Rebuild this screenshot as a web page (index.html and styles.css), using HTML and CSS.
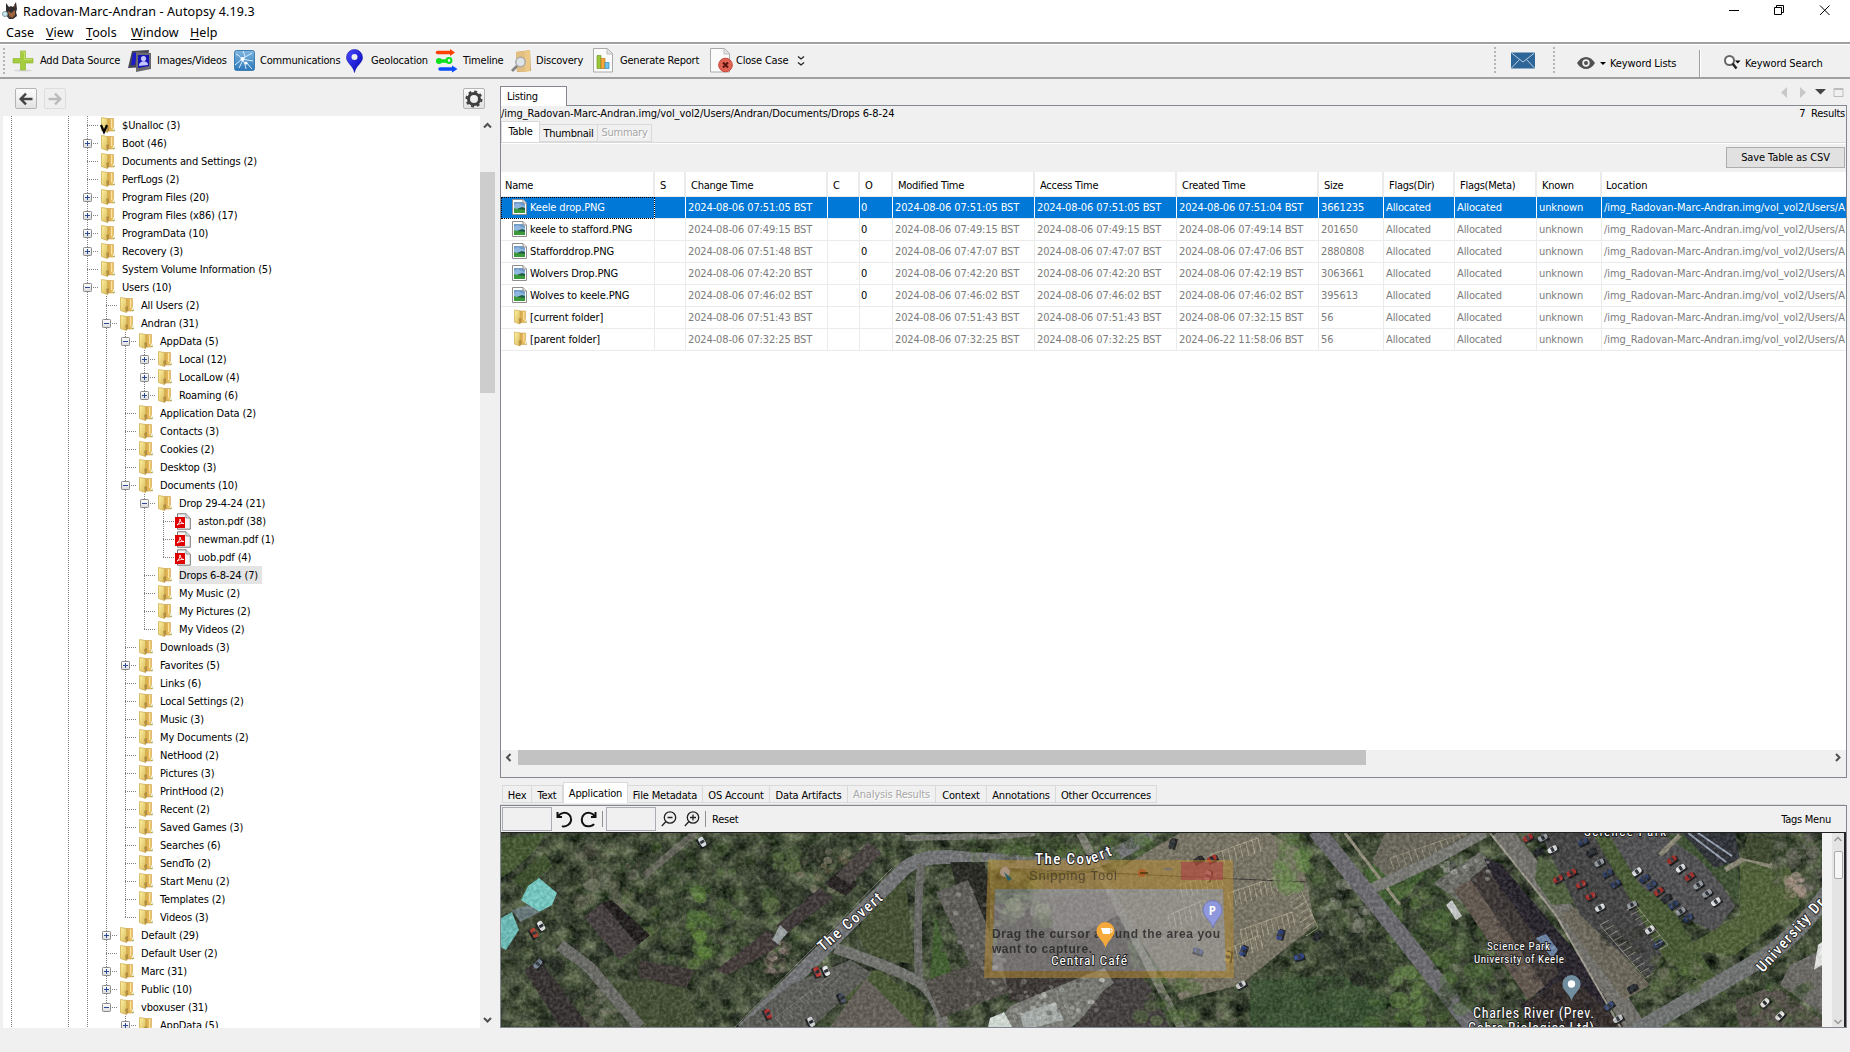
FILE: index.html
```html
<!DOCTYPE html>
<html lang="en">
<head>
<meta charset="utf-8">
<title>Radovan-Marc-Andran - Autopsy 4.19.3</title>
<link rel="stylesheet" href="styles.css">
</head>
<body>
<svg class="defs" width="0" height="0">
  <defs>
    <linearGradient id="gFront" x1="0" y1="0" x2="1" y2="1"><stop offset="0" stop-color="#fdf3a4"/><stop offset="1" stop-color="#d9b85a"/></linearGradient>
    <linearGradient id="gBack" x1="0" y1="0" x2="1" y2="0"><stop offset="0" stop-color="#c99c3e"/><stop offset="1" stop-color="#f8cf74"/></linearGradient>
    <linearGradient id="gBox" x1="0" y1="0" x2="0" y2="1"><stop offset="0" stop-color="#fff"/><stop offset="1" stop-color="#dcdcdc"/></linearGradient>
    <linearGradient id="gBlue" x1="0" y1="0" x2="0" y2="1"><stop offset="0" stop-color="#7fb6e0"/><stop offset="1" stop-color="#2a76b8"/></linearGradient>
    <linearGradient id="gPin" x1="0" y1="0" x2="1" y2="1"><stop offset="0" stop-color="#4a4aff"/><stop offset="1" stop-color="#0000b8"/></linearGradient>
    <symbol id="folder" viewBox="0 0 14 16">
      <path d="M5 1.500h7.500v9.500l.7.500v2.500H5z" fill="url(#gBack)" stroke="#c79f4d" stroke-width=".6"/>
      <path d="M10.500 2v9" stroke="#fde4a6" stroke-width="1"/>
      <path d="M.5.500l6 1v14L.5 13.500z" fill="url(#gFront)" stroke="#d2b155" stroke-width=".8"/>
      <path d="M5 10l3-1v5l-2 1.500z" fill="#a5803a" opacity=".7"/>
      <path d="M12 10.500h1.500v2.500H12z" fill="#e9f2e0"/><path d="M12.500 13h1v1h-1z" fill="#7aa24b"/>
    </symbol>
    <symbol id="image" viewBox="0 0 15 16">
      <path d="M.5.500h10.500l3.500 3.500v11.500H.5z" fill="#fff" stroke="#8e8e8e"/>
      <path d="M2 3h9l2 2v8.500H2z" fill="#6f9cc9"/><path d="M2 6l4-2 3 2 4 1v3H2z" fill="#8fb7df"/>
      <path d="M2 9l3 1 4-1 4 1v4H2z" fill="#3c9a3a"/><path d="M5 10l5-2 3 1v2z" fill="#1e5d43"/>
      <path d="M11 .5V4h3.500" fill="#eee" stroke="#8e8e8e"/>
    </symbol>
    <symbol id="pdf" viewBox="0 0 16 17">
      <path d="M2.500.8h8.500L15.300 5v11.200H2.500z" fill="#f4f4f4" stroke="#777"/><path d="M11 .8V5h4" fill="#ddd" stroke="#888" stroke-width=".8"/>
      <path d="M0 4h10v11H0z" fill="#e10000"/><path d="M2 12c2-1 3-4 3-6 .3 3 2 4.500 4 4.500-2.500-.3-5 .3-7 1.500z" fill="none" stroke="#fff" stroke-width=".9"/>
    </symbol>
  </defs>
</svg>

<header class="titlebar">
  <svg class="dog" width="16" height="17" viewBox="0 0 16 17"><path d="M4 1l3 4 2-1 2 1 3-5 1 7-1 3 1 4-4 3H7l-3-4z" fill="#332d2d"/><path d="M6 9l3 2 4-3v5l-3 3-3-2z" fill="#9e643f"/><path d="M12 3l1-1v4z" fill="#b0704d"/><circle cx="3" cy="12" r="2.500" fill="#cfeaf2" stroke="#7c9aa5"/><path d="M5 14l3 2" stroke="#555"/></svg>
  <span class="title">Radovan-Marc-Andran - Autopsy 4.19.3</span>
  <svg class="winctl" width="112" height="20" viewBox="0 0 112 20" fill="none" stroke="#000"><path d="M5 10.500h10M50.500 7.500h7v7h-7zM52.500 7V5.500h7v7H58M96 5.500l9.500 9.500M105.500 5.500L96 15"/></svg>
</header>
<nav class="menubar"><span class="m1">Case</span><span class="m2"><u>V</u>iew</span><span class="m3"><u>T</u>ools</span><span class="m4"><u>W</u>indow</span><span class="m5"><u>H</u>elp</span></nav>

<div class="toolbar">
  <i class="grip"></i>
  <div class="tools">
    <svg width="21" height="22" viewBox="0 0 21 22"><ellipse cx="10" cy="20.500" rx="9" ry="1" fill="#d5d5d5"/><path d="M7.500 1h5v7.500H20v4.500h-7.500v7h-5v-7H0V8.500h7.500z" fill="#a4cc3c" stroke="#93b93a" stroke-width=".7"/><path d="M8.500 2h3v7.500H19" fill="none" stroke="#c4e070"/></svg><span>Add Data Source</span>
    <svg width="24" height="23" viewBox="0 0 24 23"><path d="M4 2l17-1-2 17L0 19z" fill="#454553"/><path d="M5 4l4-.5-2 12-4 1z" fill="#1b1bcc"/><path d="M8 3l15 1v16l-15 3z" fill="#6a6a70"/><path d="M10 6h11v11l-11 2z" fill="#1514b4"/><circle cx="15.500" cy="9.500" r="2.600" fill="#c5c6ff"/><path d="M11 17c0-6 9-6 9-1z" fill="#c5c6ff"/></svg><span>Images/Videos</span>
    <svg width="21" height="21" viewBox="0 0 21 21"><rect x=".5" y=".5" width="20" height="20" rx="2" fill="url(#gBlue)" stroke="#3f80b3"/><path d="M2 4c6 3 9 8 10 15M1 15l7-6 10-6M8 9l11 2M12 12l6 7M5 18l6-12-2-5" stroke="#dbeeff" stroke-width="1" fill="none"/><circle cx="8.500" cy="9" r="2" fill="#fff"/><circle cx="12" cy="13" r="1.500" fill="#fff"/></svg><span>Communications</span>
    <svg width="17" height="24" viewBox="0 0 17 24"><path d="M8.500 23.500C7.500 17 .5 14 .5 8.500a8 8 0 0 1 16 0c0 5.500-7 8.500-8 15z" fill="url(#gPin)" stroke="#1010a8" stroke-width=".6"/><circle cx="8.500" cy="8" r="3" fill="#eee"/></svg><span>Geolocation</span>
    <svg width="23" height="23" viewBox="0 0 23 23" stroke-width="3.500" stroke-linecap="round"><path d="M2.500 3.500h14" stroke="#ff4100"/><path d="M15 0l5 3.500-5 3.500z" fill="#ff4100"/><path d="M3 12h8" stroke="#0be01c"/><circle cx="4" cy="12" r="3" fill="#0be01c"/><circle cx="14" cy="11.500" r="2.400" fill="none" stroke="#0be01c" stroke-width="2"/><path d="M5 20h13" stroke="#0a4dff"/><path d="M17 16.500l5.500 3.500-5.500 3.500z" fill="#0a4dff"/></svg><span>Timeline</span>
    <svg width="21" height="24" viewBox="0 0 21 24"><path d="M5 3l14-2 1 21-14 1z" fill="#cda864"/><path d="M14 2l5-1v21l-5 1z" fill="#edc987"/><path d="M5 3l9-1v21l-8-1z" fill="#e2bf80"/><circle cx="9.500" cy="13" r="4.700" fill="#dfe5e7" stroke="#aaa" stroke-width="1.500"/><path d="M6 17l-5 5" stroke="#858585" stroke-width="2.800"/></svg><span>Discovery</span>
    <svg width="21" height="25" viewBox="0 0 21 25"><path d="M.5.500h14l5 5v18.500H.5z" fill="#fbfbfb" stroke="#aaa"/><path d="M14 .5V6h5.500" fill="#e3e3e3" stroke="#bbb"/><path d="M4 7.500h4v13H4z" fill="#9bc73a" stroke="#739c24" stroke-width=".7"/><path d="M8 10.500h4v10H8z" fill="#f6a63b" stroke="#bf761a" stroke-width=".7"/><path d="M12 14.500h4v6h-4z" fill="#70c5ee" stroke="#328fbc" stroke-width=".7"/></svg><span>Generate Report</span>
    <svg width="23" height="25" viewBox="0 0 23 25"><path d="M.5.500h14l5 5v18.500H.5z" fill="#fbfbfb" stroke="#aaa"/><path d="M14 .5V6h5.500" fill="#e3e3e3" stroke="#bbb"/><circle cx="15.500" cy="17" r="6.800" fill="#df6354" stroke="#c84435"/><path d="M13 14.500l5 5m0-5l-5 5" stroke="#59130d" stroke-width="2"/></svg><span>Close Case</span>
    <svg width="9" height="12" viewBox="0 0 9 12" fill="none" stroke="#222" stroke-width="1.300"><path d="M1 1.500L4 4l3-2.500M1 7.500L4 10l3-2.500"/></svg>
  </div>
  <div class="tools-right">
    <i class="grip"></i>
    <svg width="24" height="17" viewBox="0 0 24 17"><path d="M0 .5h24v16H0z" fill="#2e6599"/><path d="M.5 1l11.500 9L23.500 1M.5 16l8-8.500M23.500 16l-8-8.500" stroke="#b7cde0" fill="none"/></svg>
    <i class="grip"></i>
    <svg class="eye" width="18" height="12" viewBox="0 0 18 12"><path d="M0 6c5-8 13-8 18 0-5 8-13 8-18 0z" fill="#505050"/><circle cx="9" cy="6" r="3.700" fill="#f0f0f0"/><circle cx="9" cy="6" r="2" fill="#505050"/></svg>
    <i class="caret"></i><span class="kl">Keyword Lists</span><i class="vsep"></i>
    <svg class="lens" width="17" height="15" viewBox="0 0 17 15"><circle cx="5.500" cy="5.500" r="4.500" fill="#fff" stroke="#666" stroke-width="2"/><path d="M8.500 8.500l4 5" stroke="#222" stroke-width="2.500"/><path d="M11 5.500h5.500l-2.700 3z" fill="#000"/></svg>
    <span class="ks">Keyword Search</span>
  </div>
</div>

<main class="work">
  <section class="left">
    <div class="navbar">
      <span class="btn"><svg width="14" height="12" viewBox="0 0 14 12" fill="none" stroke="#444" stroke-width="2.400"><path d="M7 .7L1.700 6 7 11.300M2 6h11.500"/></svg></span>
      <span class="btn off"><svg width="14" height="12" viewBox="0 0 14 12" fill="none" stroke="#bbb" stroke-width="2.400"><path d="M7 .7L12.300 6 7 11.300M12 6H.5"/></svg></span>
      <span class="btn gear"><svg width="18" height="18" viewBox="-9 -9 18 18"><circle r="5.500" fill="none" stroke="#3f3f3f" stroke-width="3"/><circle r="7.500" fill="none" stroke="#3f3f3f" stroke-width="2" stroke-dasharray="2.940 2.940"/></svg></span>
    </div>
    <div class="treebox">
      <div class="tree" id="tree"></div>
      <div class="vbar">
        <svg width="15" height="18" viewBox="0 0 15 18" fill="none" stroke="#505050" stroke-width="2"><path d="M4 11.500L7.500 8l3.500 3.500"/></svg>
        <i class="vthumb"></i>
        <svg class="dn" width="15" height="18" viewBox="0 0 15 18" fill="none" stroke="#505050" stroke-width="2"><path d="M4 8l3.500 3.500L11 8"/></svg>
      </div>
    </div>
  </section>

  <section class="right">
    <div class="toptabs"><span class="listing">Listing</span>
      <svg width="66" height="11" viewBox="0 0 66 11"><path d="M6 0v11L0 5.500zM19 0v11l6-5.500z" fill="#c8c8c8"/><path d="M34 2h11l-5.500 5.500z" fill="#444"/><path d="M53 1.500h9v8h-9z" fill="none" stroke="#bdbdbd"/><path d="M53 2.500h9" stroke="#bdbdbd"/></svg>
    </div>
    <div class="panel">
      <div class="pathrow"><span class="path">/img_Radovan-Marc-Andran.img/vol_vol2/Users/Andran/Documents/Drops 6-8-24</span><span>7&nbsp; Results</span></div>
      <div class="tabs t1"><span class="on">Table</span><span>Thumbnail</span><span class="dis">Summary</span></div>
      <div class="saverow"><span class="save">Save Table as CSV</span></div>
      <div class="grid" id="grid"></div>
      <div class="hbar"><svg width="17" height="15" viewBox="0 0 17 15" fill="none" stroke="#505050" stroke-width="2"><path d="M9.500 4L6 7.500 9.500 11"/></svg><i class="hthumb"></i><svg class="rt" width="17" height="15" viewBox="0 0 17 15" fill="none" stroke="#505050" stroke-width="2"><path d="M7 4l3.500 3.500L7 11"/></svg></div>
    </div>
    <div class="tabs t2"><span>Hex</span><span>Text</span><span class="on">Application</span><span>File Metadata</span><span>OS Account</span><span>Data Artifacts</span><span class="dis">Analysis Results</span><span>Context</span><span>Annotations</span><span>Other Occurrences</span></div>
    <div class="viewer">
      <div class="vtools">
        <i class="field"></i>
        <svg width="17" height="17" viewBox="0 0 17 17" fill="none" stroke="#111" stroke-width="2"><path d="M1.500 1v5H6M2 5.500C5 1 10 1 13 3.500s3 8-1 10.500-6 1-6 1"/></svg>
        <svg width="17" height="17" viewBox="0 0 17 17" fill="none" stroke="#111" stroke-width="2"><path d="M15.500 1v5H11M15 5.500C12 1 7 1 4 3.500s-3 8 0 10.500 9 1 10-1"/></svg>
        <i class="bar"></i><i class="field"></i>
        <svg width="16" height="16" viewBox="0 0 16 16" fill="none" stroke="#222" stroke-width="1.300"><circle cx="9" cy="6.500" r="5.700"/><path d="M6.500 6.500h5M5 10.500L.8 15"/></svg>
        <svg width="16" height="16" viewBox="0 0 16 16" fill="none" stroke="#222" stroke-width="1.300"><circle cx="9" cy="6.500" r="5.700"/><path d="M6 6.500h6M9 3.500v6M5 10.500L.8 15"/></svg>
        <i class="bar"></i><span class="reset">Reset</span><span class="tags">Tags Menu</span>
      </div>
      <div class="photo">
        <svg id="map" width="1321" height="194" viewBox="501 833 1321 194">
          <defs>
            <filter id="foliage" x="0" y="0" width="100%" height="100%" color-interpolation-filters="sRGB"><feTurbulence type="fractalNoise" baseFrequency=".06 .07" numOctaves="5" seed="8"/><feColorMatrix values=".6 .1 0 0 -.11  .6 .15 0 0 -.09  .5 .05 0 0 -.08  0 0 0 0 1"/></filter>
            <filter id="grain" x="0" y="0" width="100%" height="100%" color-interpolation-filters="sRGB"><feTurbulence type="fractalNoise" baseFrequency=".3" numOctaves="3" seed="4"/><feColorMatrix values="2.200 0 0 0 -.7  2.200 0 0 0 -.7  2.200 0 0 0 -.7  0 0 0 0 .13"/></filter>
          </defs>
          <rect x="501" y="833" width="1321" height="194" filter="url(#foliage)"/>
          <g id="land"></g>
          <rect x="501" y="833" width="1321" height="194" filter="url(#grain)"/>
          <g>
            <path d="M988 860h245l1 118H984zM995 889l-3 82h234l-3-82z" fill="#b48a34" fill-rule="evenodd" opacity=".55"/>
            <path d="M995 889h228l3 82H992z" fill="#b3b1b4" opacity=".45"/>
            <path d="M1181 862h42v18h-42z" fill="#b02b4a" opacity=".45"/>
            <circle cx="1005" cy="872" r="5" fill="#b9a3a0" opacity=".7"/><path d="M1004 872l8 7-4 2z" fill="#285c66"/>
            <circle cx="1142" cy="873" r="4" fill="#b8541f" opacity=".7"/><path d="M1140 873h8" stroke="#46340d" stroke-width="1.500"/><path d="M1164 869h8" stroke="#7c7370" stroke-width="2"/>
          </g>
          <g class="snip"><text x="1029" y="880" textLength="88" class="sniph">Snipping Tool</text><text x="992" y="938" textLength="228">Drag the cursor around the area you</text><text x="992" y="953" textLength="100">want to capture.</text></g>
          <path d="M1213 928c-2-8-10-11-10-18a9.500 9.500 0 0 1 19 0c0 7-7 10-9 18z" fill="#8f98dc" stroke="#646eb5" stroke-width=".7"/>
          <path d="M1105.500 948c-2-8-9-10-9-17a9 9 0 0 1 18 0c0 7-7 9-9 17z" fill="#f5a93a"/><path d="M1101 928h9v6h-7z" fill="#fff"/><path d="M1110 929h2v3h-2" fill="none" stroke="#fff"/>
          <path d="M1571.500 1001c-2-8-9-10-9-17a9 9 0 0 1 18 0c0 7-7 9-9 17z" fill="#718e9f"/><circle cx="1571.500" cy="984" r="3.700" fill="#fff"/>
          <g class="maplabels">
            <text class="plain" x="1209" y="915" font-size="12" font-weight="700">P</text>
            <text x="1035" y="864" textLength="57" font-size="15" font-weight="500">The Cov</text>
            <text transform="translate(1093 863) rotate(-22)" font-size="15" font-weight="500" textLength="21">ert</text>
            <text transform="translate(823 952) rotate(-41)" font-size="15" font-weight="500" textLength="80">The Covert</text>
            <text x="1051" y="965" textLength="76" font-size="13.500">Central Café</text>
            <text x="1584" y="836" textLength="82" font-size="13">Science Park</text>
            <text x="1487" y="950" textLength="63" font-size="11">Science Park</text>
            <text x="1474" y="963" textLength="90" font-size="11">University of Keele</text>
            <text x="1473" y="1018" textLength="121" font-size="14">Charles River (Prev.</text>
            <text x="1468" y="1033" textLength="126" font-size="14">Cobra Biologics Ltd)</text>
            <text transform="translate(1763 973) rotate(-48)" font-size="15" font-weight="500" textLength="93">University Dr</text>
          </g>
        </svg>
        <div class="pbar"><svg width="12" height="18" viewBox="0 0 12 18" fill="none" stroke="#999" stroke-width="1.500"><path d="M2.500 8L6 4.500 9.500 8"/></svg><i></i><svg class="dn" width="12" height="12" viewBox="0 0 12 12" fill="none" stroke="#999" stroke-width="1.500"><path d="M2.500 6L6 9.500 9.500 6"/></svg></div>
      </div>
    </div>
  </section>
</main>
<script src="app.js"></script>
</body>
</html>
```
FILE: styles.css
```css
* { box-sizing: border-box; }
body { margin: 0; width: 1850px; height: 1052px; overflow: hidden; background: #f0f0f0; color: #000;
  font: 11px/18px "DejaVu Sans Condensed", "DejaVu Sans", sans-serif; font-stretch: condensed; letter-spacing: -.25px; display: flex; flex-direction: column; }
svg { display: block; flex: none; overflow: visible; }
svg.defs { height: 0; }
span { white-space: pre; }
.titlebar { height: 23px; background: #fff; display: flex; padding-left: 2px; flex: none; }
.dog { margin-top: 2px; }
.title { font: 12.500px/24px "Noto Sans", sans-serif; letter-spacing: .1px; margin-left: 5px; flex: 1; }
.winctl { margin-right: 14px; }
.menubar { height: 19px; background: #fff; display: grid; grid-template-columns: 40px 40px 45px 59px 40px; padding-left: 6px; font: 12.500px/20px "Noto Sans", sans-serif; letter-spacing: .05px; flex: none; }
.menubar u { text-underline-offset: 2px; }
.toolbar { height: 37px; border-top: 2px solid #a0a0a0; border-bottom: 2px solid #a0a0a0; display: flex; flex: none; box-shadow: inset 0 1px #fff; }
.grip { width: 2px; height: 27px; margin: 4px 0 0 3px; background: repeating-linear-gradient(#b5b5b5 0 2px, transparent 2px 4px); flex: none; }
.tools { display: grid; grid-template-columns: 27px 88px 29px 77px 26px 86px 25px 64px 28px 48px 25px 57px 27px 90px 26px 61px 10px; align-items: center; margin-left: 8px; height: 33px; letter-spacing: -.2px; }
.tools span { margin-top: 1px; }
.tools-right { margin-left: auto; display: flex; align-items: center; height: 33px; width: 356px; }
.tools-right .grip { margin: 0 15px 0 0; }
.tools-right .grip ~ .grip { margin: 0 22px 0 18px; }
.tools-right .eye { margin-top: 5px; }
.caret { border: 3px solid transparent; border-top: 3px solid #000; border-bottom: 0; margin: 5px 4px 0 5px; }
.kl, .ks { margin-top: 6px; width: 89px; letter-spacing: -.12px; }
.vsep { width: 2px; height: 27px; margin-top: 6px; background: #a0a0a0; border-right: 1px solid #fff; margin-right: 23px; }
.lens { margin-top: 4px; }
.ks { margin-left: 4px; width: auto; }
.work { flex: 1; display: flex; min-height: 0; }
.left { width: 497px; padding-left: 3px; }
.navbar { height: 37px; display: flex; padding: 9px 12px 6px 12px; gap: 7px; }
.btn { width: 22px; height: 21px; border: 1px solid #b4b4b4; border-radius: 2px; background: linear-gradient(#fcfcfc, #e2e2e2); display: flex; align-items: center; justify-content: center; }
.btn.off { border-color: #ddd; background: #efefef; }
.gear { margin-left: auto; }
.treebox { height: 912px; display: flex; }
.tree { width: 477px; background: #fff; overflow: hidden; letter-spacing: -.16px; }
.trow { display: flex; height: 18px; line-height: 19px; padding-left: 8px; }
.guide { width: 19px; height: 18px; flex: none; }
.guide.wide { width: 57px; }
.guide.line { background: repeating-linear-gradient(#808080 0 1px, transparent 1px 2px) 0 0 / 1px 100% no-repeat; }
.name { padding-right: 4px; margin-left: 7px; height: 18px; }
.name.sel { background: #e4e4e4; }
.vbar { width: 15px; }
.vbar .vthumb { display: block; height: 221px; background: #cdcdcd; margin-top: 38px; }
.vbar .dn { margin-top: 617px; }
.right { width: 1350px; padding: 7px 0 0 3px; }
.toptabs { height: 19px; display: flex; justify-content: space-between; }
.listing { position: relative; z-index: 1; background: #fff; border: 1px solid #828790; border-bottom: 0; width: 67px; height: 20px; padding-left: 6px; line-height: 19px; }
.toptabs svg { margin-top: 1px; }
.panel { width: 1347px; height: 673px; border: 1px solid #828790; }
.pathrow { height: 15px; line-height: 15px; display: flex; justify-content: space-between; padding-right: 1px; }
.path { letter-spacing: -.09px; }
.tabs { display: grid; align-items: end; }
.tabs span { height: 18px; line-height: 17px; border: 1px solid #dadada; border-left-width: 0; text-align: center; overflow: hidden; }
.tabs .on { background: #fff; height: 21px; line-height: 19px; border-bottom: 0; border-left-width: 1px; }
.tabs .dis { color: #a7a7a7; line-height: 15px; text-shadow: 1px 1px #fff; }
.t1 { height: 22px; grid-template-columns: 39px 58px 54px; border-bottom: 1px solid #dadada; box-shadow: 0 1px #fff; }
.saverow { height: 29px; padding: 4px 1px 0 0; display: flex; justify-content: flex-end; }
.save { width: 119px; height: 21px; line-height: 20px; border: 1px solid #adadad; background: #e1e1e1; text-align: center; letter-spacing: -.1px; }
.grid { height: 578px; background: #fff; overflow: hidden; }
.row { display: grid; height: 22px; grid-template-columns: 154px 31px 142px 32px 33px 142px 142px 142px 65px 71px 82px 65px 244px; color: #7c7c7c; letter-spacing: -.13px; }
.row span { border-right: 1px solid #ebebeb; border-bottom: 1px solid #ebebeb; padding-left: 2px; line-height: 21px; overflow: hidden; }
.row span:last-child { border-right: 0; letter-spacing: -.06px; }
.row .o { padding-left: 1px; color: #000; }
.row .file { color: #000; display: flex; padding: 2px 0 0 11px; line-height: 18px; gap: 3px; }
.row .file .dir { margin-left: 2px; }
.row.head { height: 25px; color: #000; letter-spacing: -.27px; }
.row.head span { line-height: 27px; padding-left: 5px; border-right-width: 2px; }
.row.head span:first-child { padding-left: 4px; }
.row.head span:last-child { padding-left: 4px; }
.row.picked span { background: #0078d7; color: #fff; border-right-color: #fff; }
.row.picked .file { outline: 1px dotted #000; outline-offset: -1px; }
.hbar { height: 15px; display: flex; }
.hthumb { width: 848px; background: #c2c2c2; }
.hbar .rt { margin-left: auto; }
.t2 { height: 27px; padding-bottom: 1px; width: 1345px; padding-left: 2px; grid-template-columns: 30px 31px 65px 75px 67px 78px 88px 51px 69px 101px; border-bottom: 1px solid #dadada; letter-spacing: -.17px; }
.t2 span { line-height: 19px; }
.t2 .on { line-height: 21px; }
.t2 .dis { line-height: 17px; }
.t2 span:first-child { border-left-width: 1px; }
.viewer { width: 1347px; height: 223px; border: 1px solid #828790; }
.vtools { height: 26px; display: flex; align-items: center; padding-left: 1px; }
.vtools span { margin-top: 1px; }
.vtools i.field { width: 50px; height: 24px; border: 1px solid #ababb3; margin-right: 4px; }
.vtools svg + svg { margin-left: 7px; }
.vtools .bar { width: 1px; height: 16px; background: #909090; margin: 0 4px 0 5px; }
.vtools .bar + i.field { margin: 0 5px 0 -1px; }
.vtools .reset { margin-left: 2px; }
.vtools .tags { margin-left: auto; margin-right: 15px; }
.photo { height: 195px; border-top: 1px solid #222; border-right: 2px solid #222; display: flex; justify-content: space-between; background: #f2f2f2; }
#map { overflow: hidden; }
.pbar { width: 12px; background: #e4e4e4; display: flex; flex-direction: column; }
.pbar i { width: 9px; height: 28px; margin-left: 2px; border: 1px solid #aaa; border-radius: 2px; background: #f6f6f6; }
.pbar .dn { margin-top: auto; margin-bottom: 1px; }
.maplabels text { font-family: Roboto, sans-serif; fill: #fff; stroke: #222; stroke-width: 1.800px; paint-order: stroke; letter-spacing: 0; }
.maplabels .plain { stroke: none; }
.snip text { font: 700 12px "Liberation Sans", sans-serif; fill: #1c1c1c; opacity: .75; letter-spacing: 0; }
.snip .sniph { font-weight: 400; font-size: 13px; opacity: .55; }
```
FILE: app.js
```js
// Directory tree: [level, state, label], state is + (collapsed), - (expanded) or a blank leaf
const nodes = `0| |$Unalloc (3)
0|+|Boot (46)
0| |Documents and Settings (2)
0| |PerfLogs (2)
0|+|Program Files (20)
0|+|Program Files (x86) (17)
0|+|ProgramData (10)
0|+|Recovery (3)
0| |System Volume Information (5)
0|-|Users (10)
1| |All Users (2)
1|-|Andran (31)
2|-|AppData (5)
3|+|Local (12)
3|+|LocalLow (4)
3|+|Roaming (6)
2| |Application Data (2)
2| |Contacts (3)
2| |Cookies (2)
2| |Desktop (3)
2|-|Documents (10)
3|-|Drop 29-4-24 (21)
4| |aston.pdf (38)
4| |newman.pdf (1)
4| |uob.pdf (4)
3| |Drops 6-8-24 (7)
3| |My Music (2)
3| |My Pictures (2)
3| |My Videos (2)
2| |Downloads (3)
2|+|Favorites (5)
2| |Links (6)
2| |Local Settings (2)
2| |Music (3)
2| |My Documents (2)
2| |NetHood (2)
2| |Pictures (3)
2| |PrintHood (2)
2| |Recent (2)
2| |Saved Games (3)
2| |Searches (6)
2| |SendTo (2)
2| |Start Menu (2)
2| |Templates (2)
2| |Videos (3)
1|+|Default (29)
1| |Default User (2)
1|+|Marc (31)
1|+|Public (10)
1|-|vboxuser (31)
2|+|AppData (5)`.split('\n').map(l => l.split('|'));

const hasNext = (i, lvl) => {
  for (let k = i + 1; k < nodes.length; k++) {
    if (+nodes[k][0] < lvl) return false;
    if (+nodes[k][0] === lvl) return true;
  }
  return lvl === 0 || (lvl === 2 && i === nodes.length - 1);
};
document.getElementById('tree').innerHTML = nodes.map(([l, state, label], i) => {
  l = +l;
  let h = '<i class="guide wide line"></i><i class="guide line"></i>';
  for (let k = 0; k < l; k++) h += `<i class="guide ${hasNext(i, k) ? 'line' : ''}"></i>`;
  const last = !hasNext(i, l);
  let s = `<path d="M.5 0V${last ? 10 : 18}M0 9.500H11" stroke="#808080" stroke-dasharray="1 1" fill="none"/>`;
  if (state !== ' ') {
    s += '<rect x="-3.500" y="5.500" width="8" height="8" rx=".8" fill="url(#gBox)" stroke="#8a8a8a"/>' +
      `<path d="M-2 9.500h5${state === '+' ? 'M.5 7v5' : ''}" stroke="#2b4a96"/>`;
  }
  h += `<svg width="14" height="18">${s}</svg>`;
  if (label.includes('.pdf')) h += '<svg width="14" height="18"><use href="#pdf" x="-2" y="1" width="16" height="17"/></svg>';
  else h += `<svg width="14" height="18"><use href="#folder" y="1" width="14" height="16"/>${i === 0 ? '<path d="M0 9l3 7 3-7" fill="none" stroke="#000" stroke-width="2.200"/>' : ''}</svg>`;
  return `<div class="trow">${h}<span class="name ${label.startsWith('Drops') ? 'sel' : ''}">${label}</span></div>`;
}).join('');

// Listing table
const head = ['Name', 'S', 'Change Time', 'C', 'O', 'Modified Time', 'Access Time', 'Created Time', 'Size', 'Flags(Dir)', 'Flags(Meta)', 'Known', 'Location'];
const files = [
  ['Keele drop.PNG', '06 07:51:05', '06 07:51:05', '06 07:51:05', '08-06 07:51:04', '3661235'],
  ['keele to stafford.PNG', '06 07:49:15', '06 07:49:15', '06 07:49:15', '08-06 07:49:14', '201650'],
  ['Stafforddrop.PNG', '06 07:51:48', '06 07:47:07', '06 07:47:07', '08-06 07:47:06', '2880808'],
  ['Wolvers Drop.PNG', '06 07:42:20', '06 07:42:20', '06 07:42:20', '08-06 07:42:19', '3063661'],
  ['Wolves to keele.PNG', '06 07:46:02', '06 07:46:02', '06 07:46:02', '08-06 07:46:02', '395613'],
  ['[current folder]', '06 07:51:43', '06 07:51:43', '06 07:51:43', '08-06 07:32:15', '56'],
  ['[parent folder]', '06 07:32:25', '06 07:32:25', '06 07:32:25', '06-22 11:58:06', '56']
];
const cell = (t, c) => `<span class="${c || ''}">${t}</span>`;
document.getElementById('grid').innerHTML =
  `<div class="row head">${head.map(t => cell(t)).join('')}</div>` +
  files.map((f, i) => {
    const dir = f[0][0] === '[';
    const icon = dir ? '<svg class="dir" width="13" height="16"><use href="#folder" width="13" height="16"/></svg>'
      : '<svg width="15" height="16"><use href="#image" width="15" height="16"/></svg>';
    const t = s => cell(`2024-08-${s} BST`);
    return `<div class="row ${i ? '' : 'picked'}">${cell(icon + f[0], 'file')}${cell('')}${t(f[1])}${cell('')}${cell(dir ? '' : '0', 'o')}` +
      `${t(f[2])}${t(f[3])}${cell(`2024-${f[4]} BST`)}${cell(f[5])}${cell('Allocated')}${cell('Allocated')}${cell('unknown')}` +
      `${cell('/img_Radovan-Marc-Andran.img/vol_vol2/Users/A')}</div>`;
  }).join('');

// Aerial photograph, drawn in window coordinates
let seed = 7;
const rnd = () => (seed = (seed * 16807) % 2147483647) / 2147483647;
let m = '';
const poly = (p, f, o = 1) => { m += `<polygon points="${p}" fill="${f}" opacity="${o}"/>`; };
const road = (d, w, c, o = 1) => { m += `<path d="${d}" fill="none" stroke="${c}" stroke-width="${w}" opacity="${o}" stroke-linejoin="round"/>`; };
const trees = (x, y, w, h, n, cols, r = 8) => {
  for (let i = 0; i < n; i++) {
    const cx = x + rnd() * w, cy = y + rnd() * h, s = 2 + rnd() * r;
    m += `<ellipse cx="${cx.toFixed(1)}" cy="${cy.toFixed(1)}" rx="${s.toFixed(1)}" ry="${(s * .85).toFixed(1)}" fill="${cols[Math.floor(rnd() * cols.length)]}" opacity="${(.2 + rnd() * .35).toFixed(2)}"/>`;
  }
};
const car = (x, y, a, c) => {
  m += `<g transform="translate(${x} ${y}) rotate(${a})"><rect x="-5" y="-1.500" width="11" height="6" fill="#181a1c"/><rect x="-5" y="-3" width="10" height="5.500" rx="2" fill="${c}"/><rect x="-1.500" y="-2.500" width="3" height="4.500" fill="#2b3138"/></g>`;
};
const cars = (x1, y1, x2, y2, n, a) => {
  const c = ['#e4e6e8', '#22252a', '#9aa0a6', '#a82a24', '#e9ebec', '#2b3d66', '#17191c'];
  for (let i = 0; i < n; i++) if (rnd() > .12) car(x1 + (x2 - x1) * i / (n - 1), y1 + (y2 - y1) * i / (n - 1), a, c[Math.floor(rnd() * c.length)]);
};
const bays = (x1, y1, x2, y2, n, dx, dy, c = '#b8b5a3') => {
  let d = `M${x1} ${y1}L${x2} ${y2}`;
  for (let i = 0; i <= n; i++) d += `M${(x1 + (x2 - x1) * i / n).toFixed(1)} ${(y1 + (y2 - y1) * i / n).toFixed(1)}l${dx} ${dy}`;
  road(d, .8, c, .8);
};
const green = ['#46602f', '#547338', '#26351f', '#34472a', '#5f7a40'];
const dark = ['#1c221a', '#262e22', '#333d2b', '#454f3a', '#171916'];
const pale = ['#7c7c6a', '#646252', '#504d3f', '#8a8778'];

trees(501, 833, 400, 194, 210, dark, 11);
poly('501,838 545,833 536,850 510,872 501,878', '#465e30', .8);
poly('512,880 545,852 552,866 525,890', '#3c5328', .8);
poly('600,985 680,978 700,1027 640,1027', '#434f31', .8);
poly('870,905 905,875 915,965 870,955 856,935', '#434f30');
poly('935,915 955,985 930,980', '#3f5e2c');
poly('830,975 880,970 925,1005 922,1027 890,1027 845,1000', '#485832');
trees(620, 840, 180, 120, 90, green, 8);
trees(570, 840, 70, 70, 30, pale, 6);
trees(690, 880, 20, 85, 25, ['#5f8a35', '#6d9c40', '#4a7430'], 6);
trees(800, 850, 60, 40, 22, ['#8a7f63', '#a09680', '#5c553f'], 3);
trees(765, 940, 24, 35, 24, ['#9a837d', '#b09a94', '#7c6963'], 4);
trees(585, 990, 35, 37, 20, pale, 5);
road('M560 945L590 968L640 1027', 12, '#6c6d68');
road('M695 833L645 875', 7, '#77756c', .7);
road('M743 1030L905 868Q920 856 950 857L1060 865Q1110 864 1150 834', 14, '#757678');
road('M735 1027L892 868', 1, '#a9a9a5', .6);
road('M905 838L1000 836L1035 833', 6, '#777970');
road('M835 948Q905 972 922 984Q940 1000 944 1030', 11, '#747470');
road('M921 863Q916 920 919 978', 8, '#6a6b67');
poly('790,985 850,960 872,973 812,1027 738,1027', '#5c5d58');
poly('830,1027 866,978 915,1027', '#645f58');
bays(775, 1018, 835, 972, 12, 8, 8, '#8c8c86');
poly('539,878 557,893 552,905 539,912 521,900 528,886', '#78d3cc');
poly('501,918 512,912 519,930 506,950 501,947', '#6ec4bf');
poly('528,905 540,912 520,922 512,910', '#697a7c');
poly('584,917 602,903 638,945 620,960', '#433c3c');
poly('602,903 612,900 650,935 638,945', '#1c1918');
poly('640,960 695,970 686,988 638,977', '#3b3433');
poly('716,970 768,930 780,946 728,975', '#413937');
poly('776,926 820,888 834,898 786,934', '#3c3635');
poly('824,884 842,868 858,884 846,896', '#231f1e');
poly('836,876 868,842 882,853 850,884', '#484140');
poly('524,970 540,960 590,1027 560,1027', '#322e2d');
poly('772,940 780,925 788,932 778,944', '#9fa6a6');
// campus buildings and the ground round them
poly('950,862 990,862 990,950 960,900', '#24241f');
poly('936,892 968,880 1012,985 985,995', '#605e59');
poly('925,981 990,958 1010,992 941,1018', '#514d47');
poly('990,905 1120,890 1140,1027 1010,1000', '#3a3533');
poly('1035,880 1095,870 1128,910 1070,940 1030,915', '#77736d', .8);
poly('1010,1006 1104,968 1116,986 1072,1027 994,1027', '#7c7d77');
poly('1020,1014 1055,1002 1064,1020 1024,1030', '#aeb4b1');
poly('990,1018 1004,1012 1012,1027 988,1027', '#dce6df');
poly('1104,990 1140,965 1170,1027 1075,1027', '#433e3e');
trees(940, 890, 65, 100, 55, ['#9d9c95', '#4a4945', '#c2c3bd', '#34332f'], 1);
trees(1010, 980, 100, 40, 60, ['#b7b9b2', '#4a4945', '#dadbd4'], 1);
trees(930, 975, 70, 40, 20, ['#85827a', '#32312c'], 1.500);
trees(990, 860, 60, 65, 34, ['#66794e', '#8a9a6c', '#4a5a36'], 8);
trees(960, 838, 250, 22, 55, green, 6);
poly('1180,833 1270,833 1300,850 1315,925 1240,985 1180,1000 1120,910 1100,880 1150,850', '#7a7666');
for (const [x, y, u, v, n] of [[1210, 855, 1258, 838, 8], [1228, 893, 1280, 876, 10], [1168, 915, 1205, 900, 7], [1240, 930, 1292, 912, 10], [1180, 885, 1220, 872, 8], [1225, 950, 1260, 935, 7]]) bays(x, y, u, v, n, 3, 14, '#c7c2a2');
bays(1300, 888, 1318, 928, 6, -12, 8, '#c7c2a2');
road('M1080 833L1182 1030', 8, '#8b897f', .8);
road('M1000 868L1215 878L1305 882', 1, '#36342f');
trees(1140, 975, 60, 52, 35, green, 7);
trees(1210, 975, 110, 50, 40, ['#6d695c', '#514e3d', '#333a27'], 6);
poly('1250,980 1340,975 1390,1000 1375,1027 1250,1027', '#35502d', .8);
trees(1240, 970, 150, 57, 40, ['#3c5630', '#2c3d24', '#48613a'], 8);
trees(1320, 935, 70, 50, 50, dark, 8);
trees(1320, 880, 55, 55, 30, ['#96988c', '#777a6a', '#5e6352'], 5);
trees(1370, 970, 80, 55, 50, ['#618a3c', '#6a9245', '#47672f', '#34452a'], 8);
trees(1275, 833, 45, 55, 35, ['#658f42', '#4e6a36', '#6f8f50'], 7);
poly('1363,870 1400,850 1430,870 1385,915', '#42602f');
trees(1385, 870, 70, 100, 70, ['#4d6c35', '#5f7e40', '#2f4226', '#212c1b'], 8);
poly('1385,833 1470,833 1390,880 1372,862', '#6b685b');
bays(1390, 858, 1465, 833, 12, 4, 12, '#aaa58c');
road('M1345 833L1400 905', 3, '#9b9682');
road('M1363 893L1430 862L1485 832', 11, '#7c7c77');
road('M1316 830L1400 934L1475 1030', 17, '#6c6c71');
// science park
trees(1433, 900, 60, 110, 60, ['#40602f', '#55793b', '#283620'], 8);
poly('1433,883 1480,852 1500,870 1465,905', '#6c6e66');
poly('1484,858 1500,863 1608,990 1600,1027 1545,1027 1535,990', '#231f28');
poly('1454,890 1470,879 1545,986 1528,1000', '#62574e');
poly('1470,879 1486,866 1560,972 1545,986', '#3b3533');
poly('1520,1005 1570,975 1625,1027 1530,1027', '#322a29');
poly('1536,938 1546,934 1558,950 1552,958', '#6f89ad');
poly('1446,905 1452,900 1462,916 1456,920', '#cdd1cf');
trees(1440, 858, 50, 25, 40, ['#d6d6cf', '#444', '#8d9189'], 1.500);
trees(1490, 860, 120, 150, 40, ['#1d1a20', '#312d2f'], 5);
road('M1500 830L1560 905L1640 1035', 20, '#75736d');
road('M1490 833L1556 915L1622 1030', 2, '#a39f92');
poly('1538,855 1560,870 1575,903 1552,905 1535,880', '#4c5f3b');
poly('1560,915 1580,905 1650,985 1625,1000', '#6d695a');
poly('1540,833 1594,833 1670,943 1648,978 1580,915', '#424242');
poly('1594,836 1612,838 1672,910 1730,1000 1665,960', '#465931');
poly('1608,833 1690,833 1735,906 1715,932 1690,920 1640,885', '#505052');
poly('1665,835 1700,833 1738,870 1740,905 1700,860', '#3c502f');
poly('1740,862 1790,868 1800,905 1735,955 1680,950 1740,915', '#4f6135');
poly('1682,833 1735,833 1740,860 1715,868', '#2c2f35');
road('M1688 833L1726 862M1698 833L1732 856', 2, '#9da8ba');
road('M1660 855L1680 835M1725 870L1745 858L1778 868', 5, '#8d8a76');
poly('1748,833 1775,833 1770,864 1742,858', '#3c462b');
trees(1775, 833, 47, 60, 40, ['#5e5c52', '#445232', '#7c7770'], 6);
trees(1783, 875, 20, 24, 22, ['#a38c7f', '#c2ab9e'], 4);
road('M1830 890Q1798 935 1765 957L1630 1035', 17, '#737575');
poly('1735,1000 1775,985 1822,1020 1822,1027 1740,1027', '#57524a');
poly('1790,965 1822,950 1822,1015 1780,985', '#6d6b66');
poly('1818,945 1822,942 1822,965 1814,970', '#eef0ee');
trees(1730, 985, 90, 40, 40, ['#36492c', '#262e1c', '#507037'], 6);
trees(1655, 960, 50, 40, 30, ['#617d3d', '#47602f', '#6b6f56'], 6);
trees(1600, 925, 45, 30, 25, ['#393a31', '#272a24'], 4);
cars(1528, 838, 1568, 893, 5, -28); cars(1543, 838, 1600, 908, 7, -28);
cars(1583, 842, 1632, 905, 7, -28); cars(1637, 872, 1688, 918, 8, -35);
cars(1672, 860, 1716, 902, 6, -35); cars(1650, 930, 1658, 944, 2, -35);
bays(1600, 925, 1645, 978, 10, 9, -5); bays(1636, 905, 1668, 945, 8, -9, 5);
for (const c of [[1632, 988, -30, '#22252a'], [1609, 1006, -40, '#3a4d7e'], [1618, 1019, -30, '#cfd2d4'], [1765, 1003, -45, '#f1f0e8'], [1780, 1016, -45, '#f1f0e8'],
  [1243, 951, -70, '#2c4188'], [1280, 935, -75, '#2c4188'], [1317, 936, -50, '#202224'], [1299, 957, -15, '#30488e'], [1241, 985, -30, '#ddd'],
  [1198, 860, -30, '#201818'], [1212, 859, -30, '#b32d22'], [1208, 876, -75, '#d6b7b7'], [1228, 957, -80, '#c5b46f'], [1198, 951, 20, '#3a4a82'], [1172, 844, -75, '#333'],
  [817, 972, 65, '#c3322b'], [826, 971, 65, '#f2f2f2'], [768, 1014, 65, '#b02a2a'], [811, 1022, 65, '#e0e2e4'], [842, 998, 65, '#3c4656'], [541, 926, 60, '#f0f0f0'], [534, 933, 60, '#b9402c'], [538, 964, -50, '#7a8699'], [702, 842, 60, '#e5eef2']]) car(...c);
document.getElementById('land').innerHTML = m;
```
